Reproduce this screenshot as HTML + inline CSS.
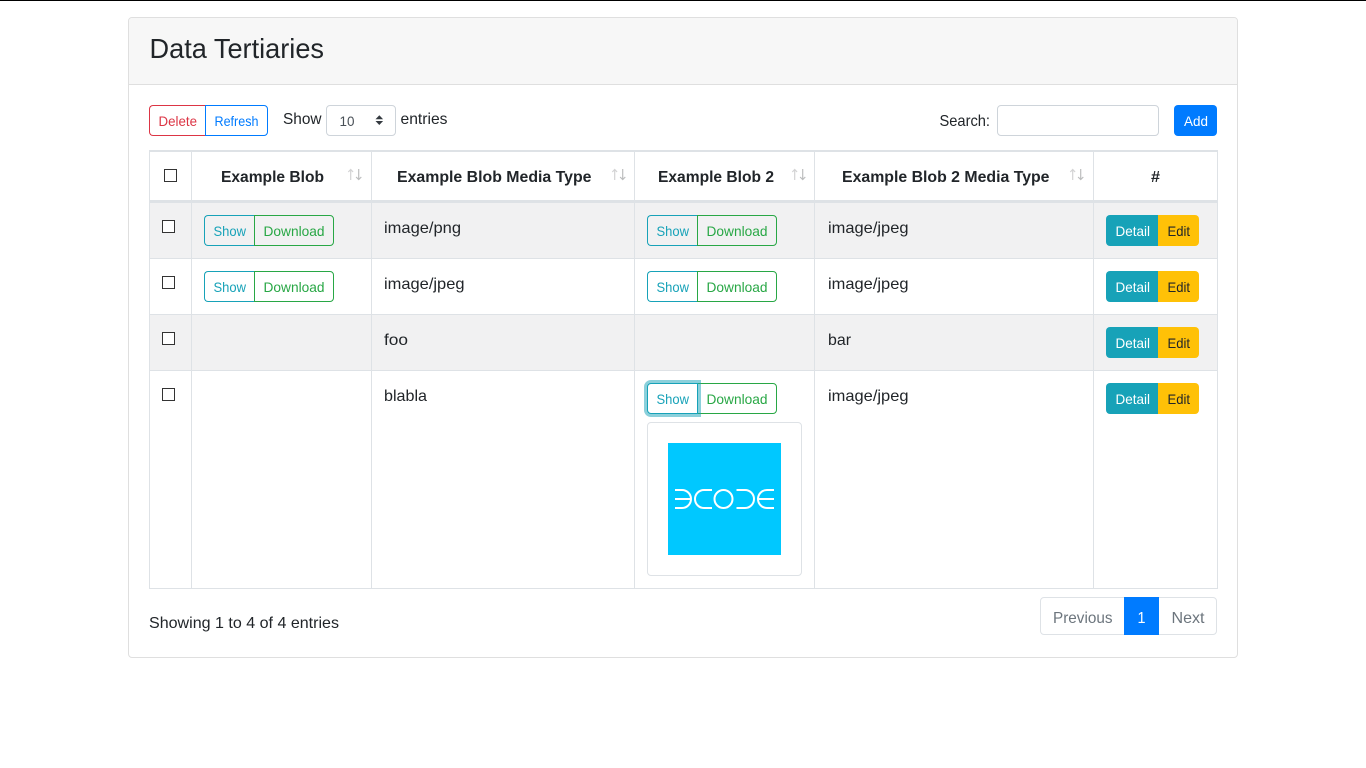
<!DOCTYPE html>
<html lang="en">
<head>
<meta charset="utf-8">
<title>Data Tertiaries</title>
<style>
html,body{margin:0;padding:0;width:1366px;height:768px;overflow:hidden;background:#fff}
.b{position:absolute;box-sizing:border-box}
#t{position:absolute;left:0;top:0;width:1366px;height:768px}
#t text{font-family:"Liberation Sans",Arial,sans-serif;fill:#212529;font-size:16px}
#t .s{font-size:14px}
#t .h{font-weight:700}
#t .info{fill:#17a2b8}
#t .ok{fill:#28a745}
#t .w{fill:#fff}
#t .g{fill:#6c757d}
</style>
</head>
<body>
<div class="b" style="left:0;top:0;width:1366px;height:1px;background:#000"></div>

<!-- card -->
<div class="b" style="left:128px;top:17px;width:1110px;height:641px;border:1px solid #dfdfdf;border-radius:4px"></div>
<div class="b" style="left:129px;top:18px;width:1108px;height:67px;background:#f7f7f7;border-bottom:1px solid #dfdfdf;border-radius:3px 3px 0 0"></div>

<!-- toolbar -->
<div class="b" style="left:149px;top:105px;width:57px;height:31px;border:1px solid #dc3545;border-right:0;border-radius:4px 0 0 4px"></div>
<div class="b" style="left:205px;top:105px;width:63px;height:31px;border:1px solid #007bff;border-radius:0 4px 4px 0"></div>
<div class="b" style="left:326px;top:105px;width:70px;height:31px;border:1px solid #ced4da;border-radius:4px"></div>
<div class="b" style="left:997px;top:105px;width:162px;height:31px;border:1px solid #ced4da;border-radius:4px"></div>
<div class="b" style="left:1174px;top:105px;width:43px;height:31px;background:#007bff;border-radius:4px"></div>

<!-- table stripes -->
<div class="b" style="left:150px;top:203px;width:1067px;height:55px;background:#f1f1f2"></div>
<div class="b" style="left:150px;top:315px;width:1067px;height:55px;background:#f1f1f2"></div>

<!-- table lines -->
<div class="b" style="left:149px;top:150px;width:1069px;height:2px;background:#dee2e6"></div>
<div class="b" style="left:149px;top:200px;width:1069px;height:3px;background:#dee2e6"></div>
<div class="b" style="left:149px;top:258px;width:1069px;height:1px;background:#dee2e6"></div>
<div class="b" style="left:149px;top:314px;width:1069px;height:1px;background:#dee2e6"></div>
<div class="b" style="left:149px;top:370px;width:1069px;height:1px;background:#dee2e6"></div>
<div class="b" style="left:149px;top:588px;width:1069px;height:1px;background:#dee2e6"></div>
<div class="b" style="left:149px;top:150px;width:1px;height:439px;background:#dee2e6"></div>
<div class="b" style="left:191px;top:150px;width:1px;height:439px;background:#dee2e6"></div>
<div class="b" style="left:371px;top:150px;width:1px;height:439px;background:#dee2e6"></div>
<div class="b" style="left:634px;top:150px;width:1px;height:439px;background:#dee2e6"></div>
<div class="b" style="left:814px;top:150px;width:1px;height:439px;background:#dee2e6"></div>
<div class="b" style="left:1093px;top:150px;width:1px;height:439px;background:#dee2e6"></div>
<div class="b" style="left:1217px;top:150px;width:1px;height:439px;background:#dee2e6"></div>

<!-- checkboxes -->
<div class="b" style="left:164px;top:169px;width:13px;height:13px;border:1px solid #333;background:#fff"></div>
<div class="b" style="left:162px;top:220px;width:13px;height:13px;border:1px solid #333;background:#fff"></div>
<div class="b" style="left:162px;top:276px;width:13px;height:13px;border:1px solid #333;background:#fff"></div>
<div class="b" style="left:162px;top:332px;width:13px;height:13px;border:1px solid #333;background:#fff"></div>
<div class="b" style="left:162px;top:388px;width:13px;height:13px;border:1px solid #333;background:#fff"></div>

<!-- show / download col 1 -->
<div class="b" style="left:204px;top:215px;width:51px;height:31px;border:1px solid #17a2b8;border-right:0;border-radius:4px 0 0 4px"></div>
<div class="b" style="left:254px;top:215px;width:80px;height:31px;border:1px solid #28a745;border-radius:0 4px 4px 0"></div>
<div class="b" style="left:204px;top:271px;width:51px;height:31px;border:1px solid #17a2b8;border-right:0;border-radius:4px 0 0 4px"></div>
<div class="b" style="left:254px;top:271px;width:80px;height:31px;border:1px solid #28a745;border-radius:0 4px 4px 0"></div>

<!-- show / download col 3 -->
<div class="b" style="left:647px;top:215px;width:51px;height:31px;border:1px solid #17a2b8;border-right:0;border-radius:4px 0 0 4px"></div>
<div class="b" style="left:697px;top:215px;width:80px;height:31px;border:1px solid #28a745;border-radius:0 4px 4px 0"></div>
<div class="b" style="left:647px;top:271px;width:51px;height:31px;border:1px solid #17a2b8;border-right:0;border-radius:4px 0 0 4px"></div>
<div class="b" style="left:697px;top:271px;width:80px;height:31px;border:1px solid #28a745;border-radius:0 4px 4px 0"></div>
<div class="b" style="left:697px;top:383px;width:80px;height:31px;border:1px solid #28a745;border-radius:0 4px 4px 0"></div>
<div class="b" style="left:647px;top:383px;width:51px;height:31px;border:1px solid #17a2b8;border-radius:4px 0 0 4px;background:#fff;box-shadow:0 0 0 3px rgba(23,162,184,.5)"></div>

<!-- image thumbnail -->
<div class="b" style="left:647px;top:422px;width:155px;height:154px;border:1px solid #dee2e6;border-radius:4px;background:#fff"></div>
<div class="b" style="left:668px;top:443px;width:113px;height:112px;background:#00c8ff"></div>

<!-- detail / edit -->
<div class="b" style="left:1106px;top:215px;width:52px;height:31px;background:#17a2b8;border-radius:4px 0 0 4px"></div>
<div class="b" style="left:1158px;top:215px;width:41px;height:31px;background:#ffc107;border-radius:0 4px 4px 0"></div>
<div class="b" style="left:1106px;top:271px;width:52px;height:31px;background:#17a2b8;border-radius:4px 0 0 4px"></div>
<div class="b" style="left:1158px;top:271px;width:41px;height:31px;background:#ffc107;border-radius:0 4px 4px 0"></div>
<div class="b" style="left:1106px;top:327px;width:52px;height:31px;background:#17a2b8;border-radius:4px 0 0 4px"></div>
<div class="b" style="left:1158px;top:327px;width:41px;height:31px;background:#ffc107;border-radius:0 4px 4px 0"></div>
<div class="b" style="left:1106px;top:383px;width:52px;height:31px;background:#17a2b8;border-radius:4px 0 0 4px"></div>
<div class="b" style="left:1158px;top:383px;width:41px;height:31px;background:#ffc107;border-radius:0 4px 4px 0"></div>

<!-- pagination -->
<div class="b" style="left:1040px;top:597px;width:177px;height:38px;border:1px solid #dee2e6;border-radius:4px"></div>
<div class="b" style="left:1124px;top:597px;width:35px;height:38px;background:#007bff"></div>

<svg id="t" width="1366" height="768" viewBox="0 0 1366 768" xmlns="http://www.w3.org/2000/svg">
  <text x="149.5" y="58" textLength="174.5" lengthAdjust="spacingAndGlyphs" style="font-size:28px">Data Tertiaries</text>

  <text class="s" x="158.5" y="126" textLength="38.5" lengthAdjust="spacingAndGlyphs" style="fill:#dc3545">Delete</text>
  <text class="s" x="214.5" y="126" textLength="44" lengthAdjust="spacingAndGlyphs" style="fill:#007bff">Refresh</text>
  <text x="283" y="124" textLength="38.5" lengthAdjust="spacingAndGlyphs">Show</text>
  <text class="s" x="339.5" y="126" textLength="15" lengthAdjust="spacingAndGlyphs" style="fill:#495057">10</text>
  <path d="M379.3 115.2l3.8 4h-7.6zM379.3 125l3.8-4h-7.6z" fill="#343a40"/>
  <text x="400.5" y="124" textLength="47" lengthAdjust="spacingAndGlyphs">entries</text>
  <text x="939.5" y="126" textLength="50.5" lengthAdjust="spacingAndGlyphs">Search:</text>
  <text class="s w" x="1184" y="126" textLength="24" lengthAdjust="spacingAndGlyphs">Add</text>

  <text class="h" x="221" y="182" textLength="103" lengthAdjust="spacingAndGlyphs">Example Blob</text>
  <text class="h" x="397" y="182" textLength="194.5" lengthAdjust="spacingAndGlyphs">Example Blob Media Type</text>
  <text class="h" x="658" y="182" textLength="116" lengthAdjust="spacingAndGlyphs">Example Blob 2</text>
  <text class="h" x="842" y="182" textLength="207.5" lengthAdjust="spacingAndGlyphs">Example Blob 2 Media Type</text>
  <text class="h" x="1151" y="182" textLength="9" lengthAdjust="spacingAndGlyphs">#</text>

  <!-- sort arrows -->
  <g fill="none" stroke="#212529" stroke-width="1.2">
    <g id="a1"><path opacity=".2" d="M350.7 180V169.5M348.3 172l2.4-2.5 2.4 2.5"/><path opacity=".3" d="M358.7 169V179.5M356.1 177l2.6 2.5 2.6-2.5"/></g>
    <g transform="translate(264 0)"><path opacity=".2" d="M350.7 180V169.5M348.3 172l2.4-2.5 2.4 2.5"/><path opacity=".3" d="M358.7 169V179.5M356.1 177l2.6 2.5 2.6-2.5"/></g>
    <g transform="translate(444 0)"><path opacity=".2" d="M350.7 180V169.5M348.3 172l2.4-2.5 2.4 2.5"/><path opacity=".3" d="M358.7 169V179.5M356.1 177l2.6 2.5 2.6-2.5"/></g>
    <g transform="translate(722 0)"><path opacity=".2" d="M350.7 180V169.5M348.3 172l2.4-2.5 2.4 2.5"/><path opacity=".3" d="M358.7 169V179.5M356.1 177l2.6 2.5 2.6-2.5"/></g>
  </g>

  <!-- row 1 -->
  <text class="s info" x="213.5" y="236" textLength="32.5" lengthAdjust="spacingAndGlyphs">Show</text>
  <text class="s ok" x="263.5" y="236" textLength="61" lengthAdjust="spacingAndGlyphs">Download</text>
  <text x="384" y="233" textLength="77" lengthAdjust="spacingAndGlyphs">image/png</text>
  <text class="s info" x="656.5" y="236" textLength="32.5" lengthAdjust="spacingAndGlyphs">Show</text>
  <text class="s ok" x="706.5" y="236" textLength="61" lengthAdjust="spacingAndGlyphs">Download</text>
  <text x="828" y="233" textLength="80.5" lengthAdjust="spacingAndGlyphs">image/jpeg</text>
  <text class="s w" x="1115.5" y="236" textLength="34.5" lengthAdjust="spacingAndGlyphs">Detail</text>
  <text class="s" x="1167.5" y="236" textLength="22.5" lengthAdjust="spacingAndGlyphs">Edit</text>

  <!-- row 2 -->
  <text class="s info" x="213.5" y="292" textLength="32.5" lengthAdjust="spacingAndGlyphs">Show</text>
  <text class="s ok" x="263.5" y="292" textLength="61" lengthAdjust="spacingAndGlyphs">Download</text>
  <text x="384" y="289" textLength="80.5" lengthAdjust="spacingAndGlyphs">image/jpeg</text>
  <text class="s info" x="656.5" y="292" textLength="32.5" lengthAdjust="spacingAndGlyphs">Show</text>
  <text class="s ok" x="706.5" y="292" textLength="61" lengthAdjust="spacingAndGlyphs">Download</text>
  <text x="828" y="289" textLength="80.5" lengthAdjust="spacingAndGlyphs">image/jpeg</text>
  <text class="s w" x="1115.5" y="292" textLength="34.5" lengthAdjust="spacingAndGlyphs">Detail</text>
  <text class="s" x="1167.5" y="292" textLength="22.5" lengthAdjust="spacingAndGlyphs">Edit</text>

  <!-- row 3 -->
  <text x="384" y="345" textLength="24" lengthAdjust="spacingAndGlyphs">foo</text>
  <text x="828" y="345" textLength="23" lengthAdjust="spacingAndGlyphs">bar</text>
  <text class="s w" x="1115.5" y="348" textLength="34.5" lengthAdjust="spacingAndGlyphs">Detail</text>
  <text class="s" x="1167.5" y="348" textLength="22.5" lengthAdjust="spacingAndGlyphs">Edit</text>

  <!-- row 4 -->
  <text x="384" y="401" textLength="43" lengthAdjust="spacingAndGlyphs">blabla</text>
  <text class="s info" x="656.5" y="404" textLength="32.5" lengthAdjust="spacingAndGlyphs">Show</text>
  <text class="s ok" x="706.5" y="404" textLength="61" lengthAdjust="spacingAndGlyphs">Download</text>
  <text x="828" y="401" textLength="80.5" lengthAdjust="spacingAndGlyphs">image/jpeg</text>
  <text class="s w" x="1115.5" y="404" textLength="34.5" lengthAdjust="spacingAndGlyphs">Detail</text>
  <text class="s" x="1167.5" y="404" textLength="22.5" lengthAdjust="spacingAndGlyphs">Edit</text>

  <!-- logo -->
  <g fill="none" stroke="#fff" stroke-width="2">
    <path d="M675 490H682a9 9 0 0 1 0 18H675M675 499H690"/>
    <path d="M712 490H704a9 9 0 0 0 0 18H712"/>
    <circle cx="723.5" cy="499" r="9"/>
    <path d="M736.5 490H745a9 9 0 0 1 0 18H736.5"/>
    <path d="M774 490H767a9 9 0 0 0 0 18H774M759 499H774"/>
  </g>

  <!-- footer -->
  <text x="149" y="628" textLength="190" lengthAdjust="spacingAndGlyphs">Showing 1 to 4 of 4 entries</text>
  <text class="g" x="1053" y="623" textLength="59.5" lengthAdjust="spacingAndGlyphs">Previous</text>
  <text class="w" x="1137.5" y="623" textLength="8" lengthAdjust="spacingAndGlyphs">1</text>
  <text class="g" x="1171.5" y="623" textLength="33" lengthAdjust="spacingAndGlyphs">Next</text>
</svg>
</body>
</html>
